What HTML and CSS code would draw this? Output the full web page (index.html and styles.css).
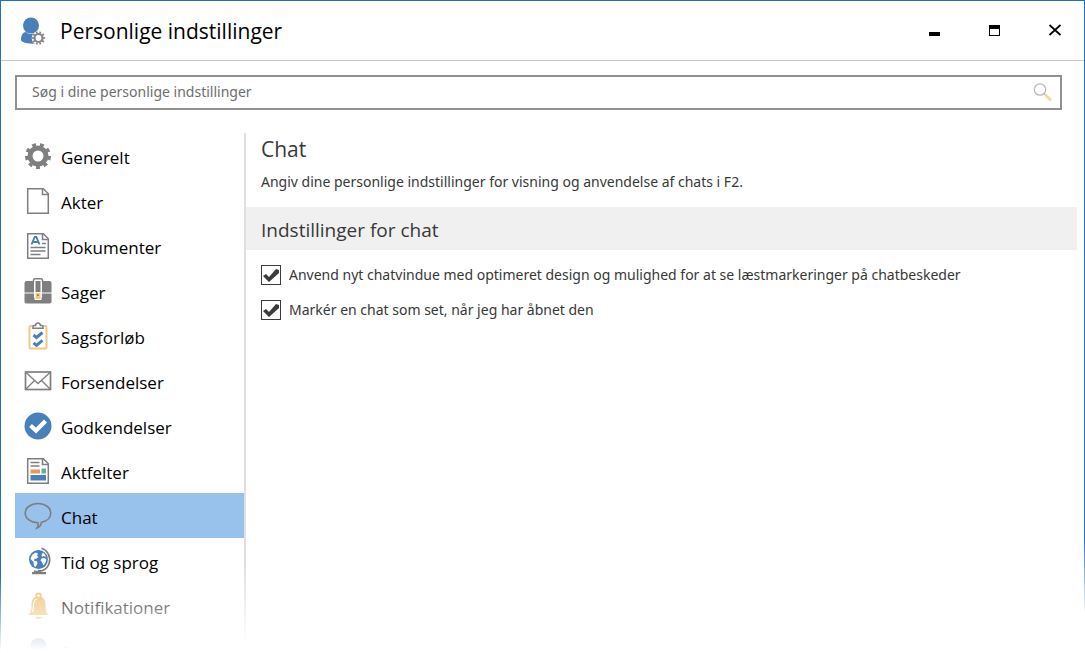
FILE: index.html
```
<!DOCTYPE html>
<html lang="da">
<head>
<meta charset="utf-8">
<meta name="viewport" content="width=device-width, initial-scale=1">
<title>Personlige indstillinger</title>
<link rel="stylesheet" href="styles.css">
</head>
<body>
<div class="window">
  <header class="titlebar">
    <svg class="titlebar-icon" viewBox="0 0 28 30" aria-hidden="true">
      <circle cx="11" cy="9.500" r="8" fill="#4a80b9"/>
      <path d="M1 24c0-5 2-8 5-8 3 2.600 7 2.600 10 0 2 .5 4 3 5 7v3c-2 2-18 3-20-2z" fill="#4a80b9"/>
      <circle cx="18.500" cy="22" r="6.800" fill="#fff"/>
      <circle cx="18.500" cy="22" r="4" fill="#fff" stroke="#858585" stroke-width="2.200"/>
      <circle cx="18.500" cy="22" r="5.600" fill="none" stroke="#858585" stroke-width="2" pathLength="20" stroke-dasharray="1 1" stroke-dashoffset=".5"/>
    </svg>
    <h1 class="titlebar-title">Personlige indstillinger</h1>
    <div class="window-buttons">
      <button class="window-button" type="button" aria-label="Minimer">
        <svg viewBox="0 0 14 14" aria-hidden="true"><path d="M2 9h11v4H2z"/></svg>
      </button>
      <button class="window-button" type="button" aria-label="Maksimer">
        <svg viewBox="0 0 14 14" aria-hidden="true"><path d="M2 2h11v11H2zM3 6v6h9V6z" fill-rule="evenodd"/></svg>
      </button>
      <button class="window-button" type="button" aria-label="Luk">
        <svg viewBox="0 0 14 14" aria-hidden="true"><path d="M2.500 2l11 10M13.500 2L2.500 12" fill="none" stroke="#000" stroke-width="1.700"/></svg>
      </button>
    </div>
  </header>

  <form class="search" role="search">
    <input class="search-input" type="text" placeholder="Søg i dine personlige indstillinger" aria-label="Søg i dine personlige indstillinger">
    <button class="search-button" type="button" aria-label="Søg">
      <svg viewBox="0 0 20 20" aria-hidden="true">
        <circle cx="8" cy="7.500" r="5.700" fill="#fff" stroke="#b8b8b8" stroke-width="1.200"/>
        <path d="M12 11.500l2 2" stroke="#b8b8b8" stroke-width="1.300"/>
        <path d="M14 13.500l4 4" stroke="#f4d6a2" stroke-width="2.800" stroke-linecap="square"/>
      </svg>
    </button>
  </form>

  <div class="columns">
    <nav class="sidebar" aria-label="Kategorier">
      <a class="nav-item" href="#generelt">
        <svg class="nav-icon" viewBox="0 0 28 28" aria-hidden="true">
          <circle cx="14" cy="14" r="8" fill="none" stroke="#7f7f7f" stroke-width="5"/>
          <circle cx="14" cy="14" r="11.500" fill="none" stroke="#7f7f7f" stroke-width="3" pathLength="18" stroke-dasharray="1 1" stroke-dashoffset=".5" transform="rotate(90 14 14)"/>
        </svg>
        <span>Generelt</span>
      </a>
      <a class="nav-item" href="#akter">
        <svg class="nav-icon" viewBox="0 0 28 28" aria-hidden="true">
          <path d="M3.700 1.700h15.600l5 5v19.600H3.700z" fill="#fff" stroke="#7f7f7f" stroke-width="1.500"/>
          <path d="M18.500 2v5.500H24" fill="none" stroke="#7f7f7f" stroke-width="1.500"/>
        </svg>
        <span>Akter</span>
      </a>
      <a class="nav-item" href="#dokumenter">
        <svg class="nav-icon" viewBox="0 0 28 28" aria-hidden="true">
          <path d="M3.700 1.700h15.600l5 5v19.600H3.700z" fill="#fff" stroke="#7f7f7f" stroke-width="1.500"/>
          <path d="M18.500 2v5.500H24" fill="none" stroke="#7f7f7f" stroke-width="1.500"/>
          <path d="M7.500 12.500l3.200-7.500h1.600l3.200 7.500M9 10h5" fill="none" stroke="#4a80b9" stroke-width="1.900"/>
          <path d="M18 11.500h4M6.500 15.500h15M6.500 19h15M6.500 22.500h10" stroke="#7f7f7f" stroke-width="1.700"/>
        </svg>
        <span>Dokumenter</span>
      </a>
      <a class="nav-item" href="#sager">
        <svg class="nav-icon" viewBox="0 0 28 28" aria-hidden="true">
          <path d="M9.500 5V3.300q0-1.500 1.500-1.500h6q1.500 0 1.500 1.500V5" fill="none" stroke="#7f7f7f" stroke-width="1.500"/>
          <path d="M2.500 4H10v11.500H.5V6Q.5 4 2.500 4zM18 4h7.500q2 0 2 2v9.500H18zM.5 16.500H10v4h8v-4h9.500v8q0 2-2 2h-23q-2 0-2-2z" fill="#7f7f7f"/>
          <path d="M11.500 4h5v11h-5z" fill="#7f7f7f"/>
          <path d="M10.500 16h7v7h-7z" fill="#fff"/>
          <path d="M11.500 16h5v6h-5z" fill="#f2c979"/>
          <path d="M13 17.500h2V19h-2z" fill="#7f7f7f"/>
        </svg>
        <span>Sager</span>
      </a>
      <a class="nav-item" href="#sagsforloeb">
        <svg class="nav-icon" viewBox="0 0 28 28" aria-hidden="true">
          <rect x="5.500" y="4" width="17" height="22.500" rx="1" fill="#fff" stroke="#efc985" stroke-width="2"/>
          <path d="M9 6.300V4.500q0-1 1-1h1.500q.5-2.500 2.500-2.500t2.500 2.500H18q1 0 1 1v1.800z" fill="#fff" stroke="#7f7f7f" stroke-width="1.500"/>
          <path d="M9.500 13l3 2.500 6-5M9.500 20.800l3 2.500 6-5" fill="none" stroke="#4a80b9" stroke-width="3"/>
        </svg>
        <span>Sagsforløb</span>
      </a>
      <a class="nav-item" href="#forsendelser">
        <svg class="nav-icon" viewBox="0 0 28 28" aria-hidden="true">
          <rect x="1.500" y="5" width="25" height="17.500" fill="#fff" stroke="#7f7f7f" stroke-width="1.700"/>
          <path d="M2 5.500l12 11 12-11M2 22l8.500-8.500M26 22l-8.500-8.500" fill="none" stroke="#7f7f7f" stroke-width="1.300"/>
        </svg>
        <span>Forsendelser</span>
      </a>
      <a class="nav-item" href="#godkendelser">
        <svg class="nav-icon" viewBox="0 0 28 28" aria-hidden="true">
          <circle cx="14" cy="14" r="13.500" fill="#4a80b9"/>
          <path d="M6.500 13.500l5.500 5 9.500-9.500" fill="none" stroke="#fff" stroke-width="4.200"/>
        </svg>
        <span>Godkendelser</span>
      </a>
      <a class="nav-item" href="#aktfelter">
        <svg class="nav-icon" viewBox="0 0 28 28" aria-hidden="true">
          <path d="M3.700 1.700h15.600l5 5v19.600H3.700z" fill="#fff" stroke="#7f7f7f" stroke-width="1.500"/>
          <path d="M18.500 2v5.500H24M6.500 5.500h9M6.500 9h9" fill="none" stroke="#7f7f7f" stroke-width="1.600"/>
          <path d="M6.500 12.500H16v4H6.500z" fill="#ef974f"/>
          <path d="M17.500 11.500H22v5h-4.500z" fill="#6fab94"/>
          <path d="M6.500 18H22v5.500H6.500z" fill="#4a80b9"/>
        </svg>
        <span>Aktfelter</span>
      </a>
      <a class="nav-item nav-item-active" href="#chat" aria-current="page">
        <svg class="nav-icon" viewBox="0 0 28 28" aria-hidden="true">
          <path d="M14 1.500c7.200 0 12.800 4.200 12.800 9.500 0 4.600-3.900 8.200-9.400 9.300-.3 2.400-1.900 4.700-4.400 5.700 1-1.600 1.200-3.500.9-5.200C6.800 20.800 1.200 16.500 1.200 11 1.200 5.700 6.800 1.500 14 1.500z" fill="none" stroke="#7f7f7f" stroke-width="1.600"/>
        </svg>
        <span>Chat</span>
      </a>
      <a class="nav-item" href="#tid-og-sprog">
        <svg class="nav-icon" viewBox="0 0 28 28" aria-hidden="true">
          <circle cx="14.500" cy="12.500" r="9.500" fill="#4a80b9"/>
          <path d="M8 8l3.500-2.500 2.500 1-1 2.500 1.500 1-2 1.500-2 .5-.5 1.500 3 1 .5 2-2 3.500-1.500-1-.5-4-3-3zM19 5.500l2 2 1 2.500-2.500-1-1.500 1-.5-2zM17.500 11.500l3-.5 2 1.500-1 3-2 3-1.500-3.500-1.500-1.500z" fill="#fff"/>
          <path d="M17.500 1.300A11.800 11.800 0 0 1 10 24" fill="none" stroke="#7f7f7f" stroke-width="1.700"/>
          <path d="M14 23h3v3h-3zM8 25h14v2.200H8z" fill="#7f7f7f"/>
        </svg>
        <span>Tid og sprog</span>
      </a>
      <a class="nav-item" href="#notifikationer">
        <svg class="nav-icon" viewBox="0 0 28 28" aria-hidden="true">
          <circle cx="14.500" cy="3.800" r="2.300" fill="none" stroke="#eec06f" stroke-width="1.800"/>
          <path d="M14.500 4.500c5 0 7 3.500 7 8 0 5 .5 8 3.500 10.500H4c3-2.500 3.500-5.500 3.500-10.500 0-4.500 2-8 7-8zM11 25h7c-1 2.500-6 2.500-7 0z" fill="#eec06f"/>
          <path d="M13 7c-3 .5-3.500 3-3.500 6 0 3-.2 5-1 7" fill="none" stroke="#fff" stroke-width="1.200"/>
        </svg>
        <span>Notifikationer</span>
      </a>
      <a class="nav-item" href="#p">
        <svg class="nav-icon" viewBox="0 0 28 28" aria-hidden="true">
          <circle cx="14.500" cy="9" r="8" fill="#4a80b9"/>
          <path d="M4 27c0-8 3-10 6-11h9c3 1 6 3 6 11z" fill="#4a80b9"/>
        </svg>
        <span>P</span>
      </a>
    </nav>

    <main class="content">
      <h2 class="content-title">Chat</h2>
      <p class="content-intro">Angiv dine personlige indstillinger for visning og anvendelse af chats i F2.</p>
      <h3 class="section-title">Indstillinger for chat</h3>
      <div class="options">
        <label class="option">
          <input class="option-box" type="checkbox" checked>
          <span>Anvend nyt chatvindue med optimeret design og mulighed for at se læstmarkeringer på chatbeskeder</span>
        </label>
        <label class="option">
          <input class="option-box" type="checkbox" checked>
          <span>Markér en chat som set, når jeg har åbnet den</span>
        </label>
      </div>
    </main>
  </div>
</div>
</body>
</html>
```

FILE: styles.css
```
* {
  box-sizing: border-box;
}

body {
  height: 100vh;
  margin: 0;
  overflow: hidden;
  background: #fff;
  color: #000;
  font-family: "Noto Sans", "Open Sans", sans-serif;
  font-size: 14px;
}

.window {
  position: relative;
  display: flex;
  flex-direction: column;
  height: 100%;
  border: 1px solid #1f6fc9;
  border-bottom: 0;
}

/* Fades the lower edge of the window out to white. */
.window::after {
  content: "";
  position: absolute;
  right: -1px;
  bottom: 0;
  left: -1px;
  height: 120px;
  background: linear-gradient(178deg, transparent 27%, #fff 75%);
  pointer-events: none;
}

.titlebar {
  display: flex;
  flex: none;
  align-items: center;
  height: 60px;
  padding-left: 19px;
  border-bottom: 1px solid #c8c8c8;
}

.titlebar-icon {
  width: 28px;
  height: 30px;
}

.titlebar-title {
  flex: 1;
  margin: 0 0 0 12px;
  font-family: "Open Sans", "Noto Sans", sans-serif;
  font-size: 21px;
  font-weight: 400;
  line-height: 28px;
}

.window-buttons {
  display: flex;
}

.window-button,
.search-button {
  display: flex;
  align-items: center;
  justify-content: center;
  padding: 0 0 2px;
  border: 0;
  background: none;
}

.window-button {
  width: 60px;
  height: 40px;
}

.window-button svg {
  width: 14px;
  height: 14px;
}

.search {
  display: flex;
  flex: none;
  height: 35px;
  margin: 14px 22px 0 14px;
  border: 2px solid #919191;
}

.search-input {
  flex: 1;
  min-width: 0;
  padding: 0 15px 2px;
  border: 0;
  outline: 0;
  background: none;
  color: #333;
  font: inherit;
}

.search-input::placeholder {
  color: #6e6e6e;
  opacity: 1;
}

.search-button {
  width: 36px;
}

.search-button svg {
  width: 20px;
  height: 20px;
}

.columns {
  display: flex;
  flex: 1;
  min-height: 0;
  margin: 23px 7px 0 14px;
}

.sidebar {
  flex: none;
  width: 229px;
}

.nav-item {
  display: flex;
  align-items: center;
  gap: 9px;
  height: 45px;
  padding: 0 9px;
  color: #000;
  font-family: "Open Sans", "Noto Sans", sans-serif;
  font-size: 17px;
  line-height: 24px;
  text-decoration: none;
}

.nav-item-active {
  background: #98c1eb;
}

.nav-icon {
  flex: none;
  width: 28px;
  height: 28px;
}

.nav-item span {
  padding-top: 4px;
}

.content {
  flex: 1;
  min-width: 0;
  border-left: 2px solid #e0e0e0;
  color: #383838;
}

.content-title {
  margin: 0;
  padding: 0 15px;
  font-family: "Open Sans", "Noto Sans", sans-serif;
  font-size: 21px;
  font-weight: 400;
  line-height: 32px;
}

.content-intro {
  margin: 7px 0 15px;
  padding: 0 15px;
  line-height: 20px;
}

.section-title {
  margin: 0;
  padding: 9px 15px 6px;
  background: #f0f0f0;
  font-family: "Open Sans", "Noto Sans", sans-serif;
  font-size: 19px;
  font-weight: 400;
  line-height: 28px;
}

.options {
  display: flex;
  flex-direction: column;
  gap: 15px;
  padding: 15px;
}

.option {
  display: flex;
  gap: 8px;
  line-height: 20px;
}

.option-box {
  flex: none;
  width: 20px;
  height: 20px;
  margin: 0;
  appearance: none;
  border: 1px solid #3c3c3c;
  background: #fff;
}

.option-box:checked::before {
  content: "";
  display: block;
  height: 100%;
  background: #3c3c3c;
  clip-path: polygon(1px 10px, 4px 8px, 7px 11px, 14px 3px, 17px 4px, 17px 7px, 7px 16px);
}
```
